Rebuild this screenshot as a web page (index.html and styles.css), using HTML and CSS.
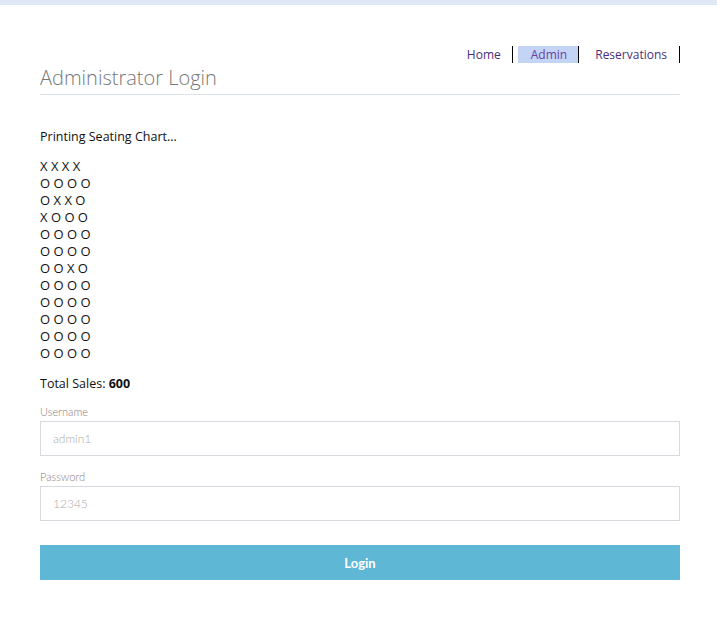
FILE: index.html
```html
<!DOCTYPE html>
<html>
<head>
<meta charset="utf-8">
<link rel="stylesheet" href="styles.css">
</head>
<body>
<div class="topbar"></div>
<div class="page">
  <nav class="nav">
    <a class="nav-item">Home</a>
    <a class="nav-item active">Admin</a>
    <a class="nav-item last">Reservations</a>
  </nav>
  <h1 class="title">Administrator Login</h1>
  <p class="status">Printing Seating Chart...</p>
  <div class="chart">
    <div>X X X X</div>
    <div>O O O O</div>
    <div>O X X O</div>
    <div>X O O O</div>
    <div>O O O O</div>
    <div>O O O O</div>
    <div>O O X O</div>
    <div>O O O O</div>
    <div>O O O O</div>
    <div>O O O O</div>
    <div>O O O O</div>
    <div>O O O O</div>
  </div>
  <p class="sales">Total Sales: <b>600</b></p>
  <form class="form">
    <label class="label">Username</label>
    <input class="input" type="text" placeholder="admin1">
    <label class="label">Password</label>
    <input class="input" type="text" placeholder="12345">
    <button class="btn" type="button">Login</button>
  </form>
</div>
</body>
</html>
```
FILE: styles.css
```css
html, body { margin: 0; padding: 0; background: #fff; }
body { font-family: "Open Sans", "Noto Sans", sans-serif; color: #111; }
.topbar { height: 5px; background: #dfe8f4; }
.page { width: 640px; margin: 0 0 0 40px; padding-top: 40px; }
.nav { display: flex; justify-content: flex-end; height: 18px; }
.nav-item { font-size: 12px; color: #4a2f78; padding: 0 11px 0 0; border-right: 1px solid #000; line-height: 17px; margin-top: 1px; }
.nav-item.active { background: #c3d4f5; color: #6a3ea6; margin-left: 5px; padding: 0 11px 0 13px; border-right: 0; box-shadow: 1px 0 0 #000; margin-right: 1px; }
.nav-item.last { padding: 0 12px 0 16px; }
.title { font-weight: 300; font-size: 20px; color: #777; margin: 1px 0 0 0; padding-bottom: 3px; border-bottom: 1px solid #dde4ee; line-height: 27px; }
.status { font-size: 12.5px; margin: 33px 0 12px 0; line-height: 18px; }
.chart { font-size: 13px; line-height: 17px; }
.sales { font-size: 12.5px; margin: 13px 0 12px 0; line-height: 18px; }
.sales b { font-weight: 700; }
.form { display: flex; flex-direction: column; }
.label { font-family: "Lato", sans-serif; font-size: 11px; color: #8a7a7a; line-height: 14px; font-weight: 300; margin-bottom: 2px; }
.input { height: 35px; box-sizing: border-box; border: 1px solid #d8d8e0; padding: 0 12px; font-family: "Lato", sans-serif; font-weight: 300; font-size: 12px; margin: 0 0 14px 0; outline: none; }
.input::placeholder { color: #aaa; }
.btn { margin-top: 10px; height: 35px; background: #5db7d5; border: 0; color: #fff; font-family: "Lato", sans-serif; font-weight: 700; font-size: 13px; }
```
